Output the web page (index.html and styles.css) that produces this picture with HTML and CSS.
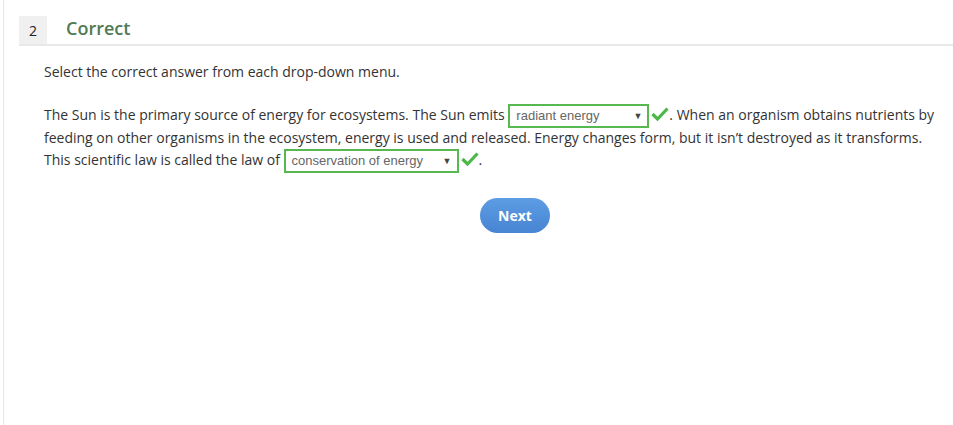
FILE: index.html
```html
<!DOCTYPE html>
<html>
<head>
<meta charset="utf-8">
<link rel="stylesheet" href="styles.css">
</head>
<body>
<div class="page">
  <div class="question">
    <div class="qhead">
      <div class="qnum">2</div>
      <div class="qtitle">Correct</div>
    </div>
    <div class="qbody">
      <p class="instr">Select the correct answer from each drop-down menu.</p>
      <p class="passage">The Sun is the primary source of energy for ecosystems. The Sun emits <span class="sel w1"><span class="val">radiant energy</span><span class="arrow">▼</span></span><svg class="check" width="18" height="14" viewBox="0 0 18 14"><path d="M1.5 7 L6.5 12 L16.5 1.5" fill="none" stroke="#4cb848" stroke-width="3.2"/></svg>. When an organism obtains nutrients by feeding on other organisms in the ecosystem, energy is used and released. Energy changes form, but it isn’t destroyed as it transforms. This scientific law is called the law of <span class="sel w2"><span class="val">conservation of energy</span><span class="arrow">▼</span></span><svg class="check" width="18" height="14" viewBox="0 0 18 14"><path d="M1.5 7 L6.5 12 L16.5 1.5" fill="none" stroke="#4cb848" stroke-width="3.2"/></svg>.</p>
      <div class="actions"><button class="next">Next</button></div>
    </div>
  </div>
</div>
</body>
</html>
```
FILE: styles.css
```css
html, body { margin: 0; padding: 0; background: #fff; }
body { font-family: "Open Sans", "Liberation Sans", sans-serif; color: #333; }
.page {
  border-left: 1px solid #e6e6e6;
  margin-left: 3px;
  height: 425px;
  box-sizing: border-box;
  padding: 16px 0 0 15px;
}
.qhead {
  display: flex;
  align-items: stretch;
  border-bottom: 2px solid #e8e8e8;
  height: 28px;
}
.qnum {
  width: 28px;
  background: #f0f0f0;
  font-size: 14px;
  color: #222;
  display: flex;
  align-items: center;
  justify-content: center;
}
.qtitle {
  margin-left: 19px;
  font-size: 18px;
  font-weight: 600;
  color: #4f7a53;
  line-height: 24px;
}
.qbody { padding: 0 0 0 25px; }
.instr { margin: 16px 0 0; font-size: 14px; line-height: 20px; }
.passage { margin: 22px 0 0; font-size: 14px; line-height: 22.5px; padding-right: 10px; }
.sel {
  display: inline-flex;
  align-items: center;
  justify-content: space-between;
  box-sizing: border-box;
  height: 24px;
  margin: -5px 0;
  border: 2px solid #56b84f;
  padding: 0 5px 0 6px;
  font-family: "Liberation Sans", Arial, sans-serif;
  font-size: 13px;
  color: #666;
  vertical-align: middle;
}
.w1 { width: 141px; }
.w2 { width: 175px; }
.arrow { font-size: 9px; color: #444; }
.check { vertical-align: -1px; margin-left: 2px; }
.actions { display: flex; justify-content: center; margin-top: 26px; padding-left: 33px; }
.next {
  width: 70px;
  height: 35px;
  border-radius: 18px;
  border: none;
  background: linear-gradient(#5d9de3, #4784d3);
  color: #fff;
  font-family: "Open Sans", sans-serif;
  font-weight: 700;
  font-size: 14px;
}
```
